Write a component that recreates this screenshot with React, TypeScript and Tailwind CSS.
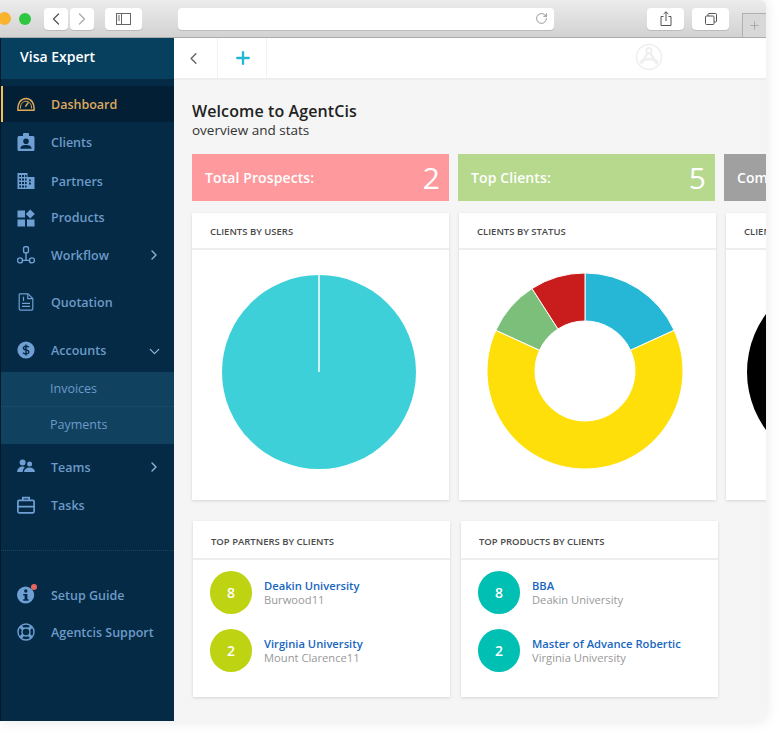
import { ChevronDown, ChevronLeft, ChevronRight, Plus, RotateCw } from "lucide-react";
import type { ReactNode } from "react";

const iconClass = "w-[18px] h-[18px] text-[#6f9fd3] shrink-0";

const DashboardIcon = () => (
  <svg viewBox="0 0 18 18" className="w-[18px] h-[18px] text-[#e0a95a] shrink-0" fill="none" stroke="currentColor" strokeWidth="1.5">
    <path d="M1 15.2 C0.2 8.5 4 3.4 9 3.4 C14 3.4 17.8 8.5 17 15.2 Z" />
    <path d="M3.4 13.6 C3.2 9.5 5.5 6.2 9 6.2 C12.5 6.2 14.8 9.5 14.6 13.6" strokeWidth="1" />
    <path d="M8.4 11.6 L11.4 7.4" strokeWidth="1.6" />
  </svg>
);

const ClientsIcon = () => (
  <svg viewBox="0 0 18 18" className={iconClass} fill="currentColor">
    <path fillRule="evenodd" d="M2 3 H6 V1 Q6 0 7 0 H11 Q12 0 12 1 V3 H16 Q17.5 3 17.5 4.5 V16.5 Q17.5 18 16 18 H2 Q0.5 18 0.5 16.5 V4.5 Q0.5 3 2 3 Z M9 5.5 A2.8 2.8 0 1 0 9 11.1 A2.8 2.8 0 1 0 9 5.5 Z M3.4 15.8 H14.6 C14.6 13 12.2 12 9 12 C5.8 12 3.4 13 3.4 15.8 Z" />
  </svg>
);

const PartnersIcon = () => (
  <svg viewBox="0 0 18 18" className={iconClass} fill="currentColor">
    <path fillRule="evenodd" d="M0.5 1 H10.5 V5 H17.5 V17 H0.5 Z M2.2 3 V5 H4 V3 Z M5 3 V5 H7 V3 Z M8 3 V5 H9.6 V3 Z M2.2 6.4 V8.4 H4 V6.4 Z M5 6.4 V8.4 H7 V6.4 Z M8 6.4 V8.4 H9.6 V6.4 Z M2.2 10 V12 H4 V10 Z M5 10 V12 H7 V10 Z M8 10 V12 H9.6 V10 Z M2.2 13.4 V15.4 H4 V13.4 Z M5 13.4 V15.4 H7 V13.4 Z M8 13.4 V15.4 H9.6 V13.4 Z M12 7.4 V9.2 H13.8 V7.4 Z M12 10.6 V12.4 H13.8 V10.6 Z" />
  </svg>
);

const ProductsIcon = () => (
  <svg viewBox="0 0 18 18" className={iconClass} fill="currentColor">
    <rect x="0.5" y="1.5" width="7.5" height="7" />
    <rect x="0.5" y="10.5" width="7.5" height="7" />
    <rect x="10" y="10.5" width="7.5" height="7" />
    <path d="M13.2 0.6 L17.8 5 L13.2 9.4 L8.8 5 Z" />
  </svg>
);

const WorkflowIcon = () => (
  <svg viewBox="0 0 18 18" className={iconClass} fill="none" stroke="currentColor" strokeWidth="1.4">
    <rect x="6.6" y="0.8" width="4.8" height="6" rx="1.2" />
    <circle cx="3" cy="14.4" r="2.5" />
    <circle cx="15" cy="14.4" r="2.5" />
    <path d="M9 6.8 V14.4 M5.5 14.4 H12.5" />
  </svg>
);

const QuotationIcon = () => (
  <svg viewBox="0 0 18 18" className={iconClass} fill="none" stroke="currentColor" strokeWidth="1.2">
    <path d="M3 0.8 H11 L15.8 5.4 V15.8 Q15.8 17.2 14.4 17.2 H3.6 Q2.2 17.2 2.2 15.8 V1.8 Q2.2 0.8 3 0.8 Z" />
    <path d="M10.8 1 V5.6 H15.6 M5 10.4 H13 M5 13.4 H13 M6.5 3.8 V8" />
  </svg>
);

const AccountsIcon = () => (
  <svg viewBox="0 0 18 18" className={iconClass}>
    <circle cx="9" cy="9" r="8.6" fill="currentColor" />
    <path d="M11.8 6.2 C11 5 7 4.6 6.4 6.6 C6 8.4 8 8.7 9.2 9 C11 9.4 12.2 10 11.7 11.6 C11.2 13.4 7.2 13.2 6 11.8 M9 3.4 V14.6" fill="none" stroke="#042a45" strokeWidth="1.4" />
  </svg>
);

const TeamsIcon = () => (
  <svg viewBox="0 0 18 18" className={iconClass} fill="currentColor">
    <circle cx="5.6" cy="4.4" r="3" />
    <circle cx="12.6" cy="6" r="2.5" />
    <path d="M0 14 C0.4 10.2 2.6 8.4 5.2 8.4 C6.4 8.4 7.2 8.8 7.8 9.2 C6.4 10.6 5.8 12.2 5.7 14 Z" />
    <path d="M7 14 C7.2 11 9.6 9.4 12.6 9.4 C15.6 9.4 17.8 11 18 14 Z" />
  </svg>
);

const TasksIcon = () => (
  <svg viewBox="0 0 18 18" className={iconClass} fill="none" stroke="currentColor" strokeWidth="1.7">
    <rect x="0.9" y="4.4" width="16.2" height="12.4" rx="1.2" />
    <path d="M5.8 4.4 V1.6 H12.2 V4.4 M0.9 10.6 H17.1" />
  </svg>
);

const SetupIcon = () => (
  <div className="relative shrink-0 w-[18px] h-[18px]">
    <svg viewBox="0 0 18 18" className={iconClass}>
      <circle cx="8.6" cy="9" r="8.6" fill="currentColor" />
      <circle cx="8.8" cy="5" r="1.7" fill="#042a45" />
      <path d="M6.2 8 H10.4 V13.2 H11.6 V14.8 H6.2 V13.2 H7.6 V9.6 H6.2 Z" fill="#042a45" />
    </svg>
    {/* notification dot */}
    <span className="absolute -top-[2px] -right-[2px] w-[6px] h-[6px] rounded-full bg-[#e8645f]" />
  </div>
);

const SupportIcon = () => (
  <svg viewBox="0 0 18 18" className={iconClass} fill="none" stroke="currentColor">
    <circle cx="9" cy="9" r="8" strokeWidth="1.4" />
    <circle cx="9" cy="9" r="4" strokeWidth="1.4" />
    <path d="M3.6 3.6 L6.2 6.2 M14.4 3.6 L11.8 6.2 M3.6 14.4 L6.2 11.8 M14.4 14.4 L11.8 11.8" strokeWidth="3" />
  </svg>
);

type NavProps = {
  icon: ReactNode;
  label: string;
  height: string;
  arrow?: "right" | "down";
};

const NavItem = ({ icon, label, height, arrow }: NavProps) => (
  <div className={`flex items-center pl-[16px] pr-[12px] text-[12.5px] font-semibold text-[#6d9ac8] ${height}`}>
    {icon}
    <span className="ml-4 mt-[2px] flex-1 whitespace-nowrap">{label}</span>
    {arrow === "right" && <ChevronRight className="w-[16px] h-[16px]" strokeWidth={2} color="#8fb5dd" />}
    {arrow === "down" && <ChevronDown className="w-[17px] h-[17px] mt-[3px] -mr-[1px]" strokeWidth={1.8} color="#8fb5dd" />}
  </div>
);

const Sidebar = () => (
  <aside className="w-[174px] shrink-0 bg-[#042a45] border-l border-[#02192b]">
    <div className="h-[41px] flex items-center pl-[19px] pb-[4px] bg-[#07405f] text-white text-[14px] font-semibold">
      Visa Expert
    </div>

    <div className="mt-[7px] h-[36px] flex items-center pl-[14px] bg-[#021f35] border-l-2 border-[#f5c04f] text-[12.5px] font-semibold text-[#dfa85e]">
      <DashboardIcon />
      <span className="ml-4 mt-[2px]">Dashboard</span>
    </div>

    <NavItem icon={<ClientsIcon />} label="Clients" height="h-[40px]" />
    <NavItem icon={<PartnersIcon />} label="Partners" height="h-[38px]" />
    <NavItem icon={<ProductsIcon />} label="Products" height="h-[35px]" />
    <NavItem icon={<WorkflowIcon />} label="Workflow" arrow="right" height="h-[40px]" />
    <NavItem icon={<QuotationIcon />} label="Quotation" height="h-[54px]" />
    <NavItem icon={<AccountsIcon />} label="Accounts" arrow="down" height="h-[42px] mb-px" />

    {/* Accounts submenu */}
    <div className="bg-[#10415f] text-[12.5px] text-[#6d9ac8] font-medium">
      <div className="h-[35px] flex items-center pl-[49px] border-b border-dotted border-[#1f5170]">Invoices</div>
      <div className="h-[37px] flex items-center pl-[49px]">Payments</div>
    </div>

    <NavItem icon={<TeamsIcon />} label="Teams" arrow="right" height="h-[46px]" />
    <NavItem icon={<TasksIcon />} label="Tasks" height="h-[30px]" />

    <div className="mt-[30px] pt-[26px] border-t border-dotted border-[#164461]">
      <NavItem icon={<SetupIcon />} label="Setup Guide" height="h-[36px]" />
      <NavItem icon={<SupportIcon />} label="Agentcis Support" height="h-[38px]" />
    </div>
  </aside>
);

const Toolbar = () => (
  <div className="h-[38px] shrink-0 flex items-center border-b border-[#ababab] bg-gradient-to-b from-[#ececec] to-[#d2d2d2]">
    <span className="-ml-[2px] w-[13px] h-[13px] rounded-full bg-[#f9b32c]" />
    <span className="ml-[8px] w-[12px] h-[12px] rounded-full bg-[#2dc840]" />

    <div className="ml-[13px] w-[24px] h-[22px] rounded-[4px] bg-white flex items-center justify-center shadow-[0_1px_0_#bbb]">
      <ChevronLeft className="w-[20px] h-[20px] text-[#555]" strokeWidth={1.5} />
    </div>
    <div className="ml-[2px] w-[24px] h-[22px] rounded-[4px] bg-white flex items-center justify-center shadow-[0_1px_0_#bbb]">
      <ChevronRight className="w-[20px] h-[20px] text-[#aaa]" strokeWidth={1.5} />
    </div>
    <div className="ml-[11px] w-[37px] h-[22px] rounded-[4px] bg-white flex items-center justify-center shadow-[0_1px_0_#bbb]">
      <svg viewBox="0 0 15 12" className="w-[15px] h-[12px]" fill="none" stroke="#666" strokeWidth="1">
        <rect x="0.5" y="0.5" width="14" height="11" />
        <path d="M5.5 0.5 V11.5 M1.8 3 H4 M1.8 5 H4 M1.8 7 H4" />
      </svg>
    </div>

    {/* Address bar */}
    <div className="ml-[36px] w-[376px] h-[22px] rounded-[4px] bg-white flex items-center justify-end pr-[6px] shadow-[0_1px_0_#bbb]">
      <RotateCw className="w-[13px] h-[13px] text-[#666]" strokeWidth={1.2} />
    </div>

    <div className="ml-[93px] w-[37px] h-[22px] rounded-[4px] bg-white flex items-center justify-center shadow-[0_1px_0_#bbb]">
      <svg viewBox="0 0 12 15" className="w-[12px] h-[15px]" fill="none" stroke="#555" strokeWidth="1">
        <path d="M3.5 5.5 H1 V14.5 H11 V5.5 H8.5 M6 10 V0.8 M3.6 3 L6 0.8 L8.4 3" />
      </svg>
    </div>
    <div className="ml-[8px] w-[37px] h-[22px] rounded-[4px] bg-white flex items-center justify-center shadow-[0_1px_0_#bbb]">
      <svg viewBox="0 0 12 12" className="w-[12px] h-[12px]" fill="none" stroke="#555" strokeWidth="1">
        <rect x="0.5" y="3" width="8.5" height="8.5" rx="1" />
        <path d="M3 3 V1.5 Q3 0.5 4 0.5 H10.5 Q11.5 0.5 11.5 1.5 V8 Q11.5 9 10.5 9 H9" />
      </svg>
    </div>

    {/* New tab */}
    <div className="ml-[13px] w-[24px] h-[24px] self-end flex items-center justify-center border-l border-t border-[#b0b0b0] bg-[#d8d8d8]">
      <Plus className="w-[13px] h-[13px] text-[#888]" strokeWidth={1} />
    </div>
  </div>
);

const TopBar = () => (
  <div className="h-[42px] shrink-0 flex items-center bg-white border-b-2 border-[#eeeeee]">
    <div className="w-[44px] h-full flex items-center pl-[10px] border-r border-[#f3f3f3]">
      <ChevronLeft className="w-[19px] h-[19px] text-[#666]" strokeWidth={1.8} />
    </div>
    <div className="w-[49px] h-full flex items-center justify-center pl-[2px] border-r border-[#f3f3f3]">
      <Plus className="w-[20px] h-[20px] text-[#26b7d6]" strokeWidth={2.8} />
    </div>
    {/* faint logo */}
    <svg viewBox="0 0 28 28" className="ml-[368px] -mt-[2px] w-[28px] h-[28px]" fill="none" stroke="#efefef" strokeWidth="1.5">
      <circle cx="14" cy="14" r="12.5" />
      <circle cx="14" cy="7.5" r="2.6" strokeWidth="2" />
      <path d="M12.8 10 L6 21 M15.2 10 L22 21 M5 19 Q14 13 23 19" strokeWidth="2.4" />
    </svg>
  </div>
);

const StatCard = ({ label, value, color }: { label: string; value?: string; color: string }) => (
  <div className={`w-[257px] h-[47px] shrink-0 flex items-center justify-between pl-[13px] pr-[9px] text-white ${color}`}>
    <span className="text-[14px] font-semibold tracking-[0.1px]">{label}</span>
    {value && <span className="text-[30px] leading-none">{value}</span>}
  </div>
);

type CardProps = { title: string; header: string; children?: ReactNode };

const Card = ({ title, header, children }: CardProps) => (
  <div className="w-[257px] shrink-0 bg-white shadow-[0_1px_3px_rgba(0,0,0,0.13)]">
    <div className={`flex items-center pl-[18px] border-b-2 border-[#eeeeee] text-[9.5px] font-semibold uppercase text-[#4a4a4a] ${header}`}>
      {title}
    </div>
    {children}
  </div>
);

const slice = (from: number, to: number) => {
  const pt = (deg: number, r: number) => {
    const a = ((deg - 90) * Math.PI) / 180;
    return `${100 + r * Math.cos(a)} ${100 + r * Math.sin(a)}`;
  };
  const large = to - from > 180 ? 1 : 0;
  return `M${pt(from, 98)} A98 98 0 ${large} 1 ${pt(to, 98)} L${pt(to, 50)} A50 50 0 ${large} 0 ${pt(from, 50)} Z`;
};

const PieChart = () => (
  <svg viewBox="0 0 200 200" className="w-[200px] h-[200px]">
    <circle cx="100" cy="100" r="97" fill="#3dd0d8" />
    <line x1="100" y1="3" x2="100" y2="100" stroke="#fff" strokeWidth="1.5" />
  </svg>
);

const DonutChart = () => (
  <svg viewBox="0 0 200 200" className="w-[200px] h-[200px]" stroke="#fff" strokeWidth="1">
    <path d={slice(0, 65.45)} fill="#27b7d6" />
    <path d={slice(65.45, 294.55)} fill="#fedf0a" />
    <path d={slice(294.55, 327.27)} fill="#7bbf7b" />
    <path d={slice(327.27, 360)} fill="#c91c1c" />
  </svg>
);

const Row = ({ count, name, sub, color }: { count: string; name: string; sub: string; color: string }) => (
  <div className="flex items-center h-[43px]">
    <div className={`w-[42px] h-[43px] shrink-0 rounded-full flex items-center justify-center text-white text-[14px] font-semibold ${color}`}>
      {count}
    </div>
    <div className="ml-[12px] text-[11.2px] leading-[14px]">
      <div className="font-semibold text-[#1766c0]">{name}</div>
      <div className="text-[#999]">{sub}</div>
    </div>
  </div>
);

export default function App() {
  return (
    <div className="w-[781px] h-[737px] overflow-hidden bg-white" style={{ fontFamily: '"Open Sans", sans-serif' }}>
      {/* Browser window */}
      <div className="w-[766px] h-[721px] flex flex-col overflow-hidden rounded-tr-[6px] rounded-br-[6px] shadow-[0_0_14px_rgba(0,0,0,0.1)]">
        <Toolbar />

        <div className="flex flex-1 min-h-0">
          <Sidebar />

          <main className="flex-1 min-w-0 overflow-hidden bg-[#f5f5f5]">
            <TopBar />

            <div className="pl-[18px] pt-[21px]">
              <h1 className="text-[16px] leading-[20px] font-semibold tracking-[0.1px] text-[#222]">Welcome to AgentCis</h1>
              <p className="text-[13.5px] leading-[18px] text-[#333]">overview and stats</p>

              {/* Stats */}
              <div className="mt-[15px] flex gap-[9px]">
                <StatCard label="Total Prospects:" value="2" color="bg-[#fe9a9d]" />
                <StatCard label="Top Clients:" value="5" color="bg-[#b6d98d]" />
                <StatCard label="Completed" color="bg-[#a0a0a0]" />
              </div>

              {/* Charts */}
              <div className="mt-[12px] flex gap-[10px]">
                <Card title="Clients by users" header="h-[37px] pt-[3px]">
                  <div className="h-[250px] flex items-center justify-center pr-[4px] pb-[6px]">
                    <PieChart />
                  </div>
                </Card>
                <Card title="Clients by status" header="h-[37px] pt-[3px]">
                  <div className="h-[250px] flex items-center justify-center pr-[5px] pb-[8px]">
                    <DonutChart />
                  </div>
                </Card>
                <Card title="Clients by source" header="h-[37px] pt-[3px]">
                  <div className="h-[250px] flex items-center pl-[21px] pb-[6px]">
                    <div className="w-[196px] h-[196px] rounded-full bg-black" />
                  </div>
                </Card>
              </div>

              {/* Top lists */}
              <div className="mt-[21px] ml-px flex gap-[11px]">
                <Card title="Top partners by clients" header="h-[39px] pt-[5px]">
                  <div className="pl-[17px] pt-[11px] h-[137px] flex flex-col gap-[15px]">
                    <Row count="8" name="Deakin University" sub="Burwood11" color="bg-[#bed312]" />
                    <Row count="2" name="Virginia University" sub="Mount Clarence11" color="bg-[#bed312]" />
                  </div>
                </Card>
                <Card title="Top products by clients" header="h-[39px] pt-[5px]">
                  <div className="pl-[17px] pt-[11px] h-[137px] flex flex-col gap-[15px]">
                    <Row count="8" name="BBA" sub="Deakin University" color="bg-[#00bfb3]" />
                    <Row count="2" name="Master of Advance Robertic" sub="Virginia University" color="bg-[#00bfb3]" />
                  </div>
                </Card>
              </div>
            </div>
          </main>
        </div>
      </div>
    </div>
  );
}
